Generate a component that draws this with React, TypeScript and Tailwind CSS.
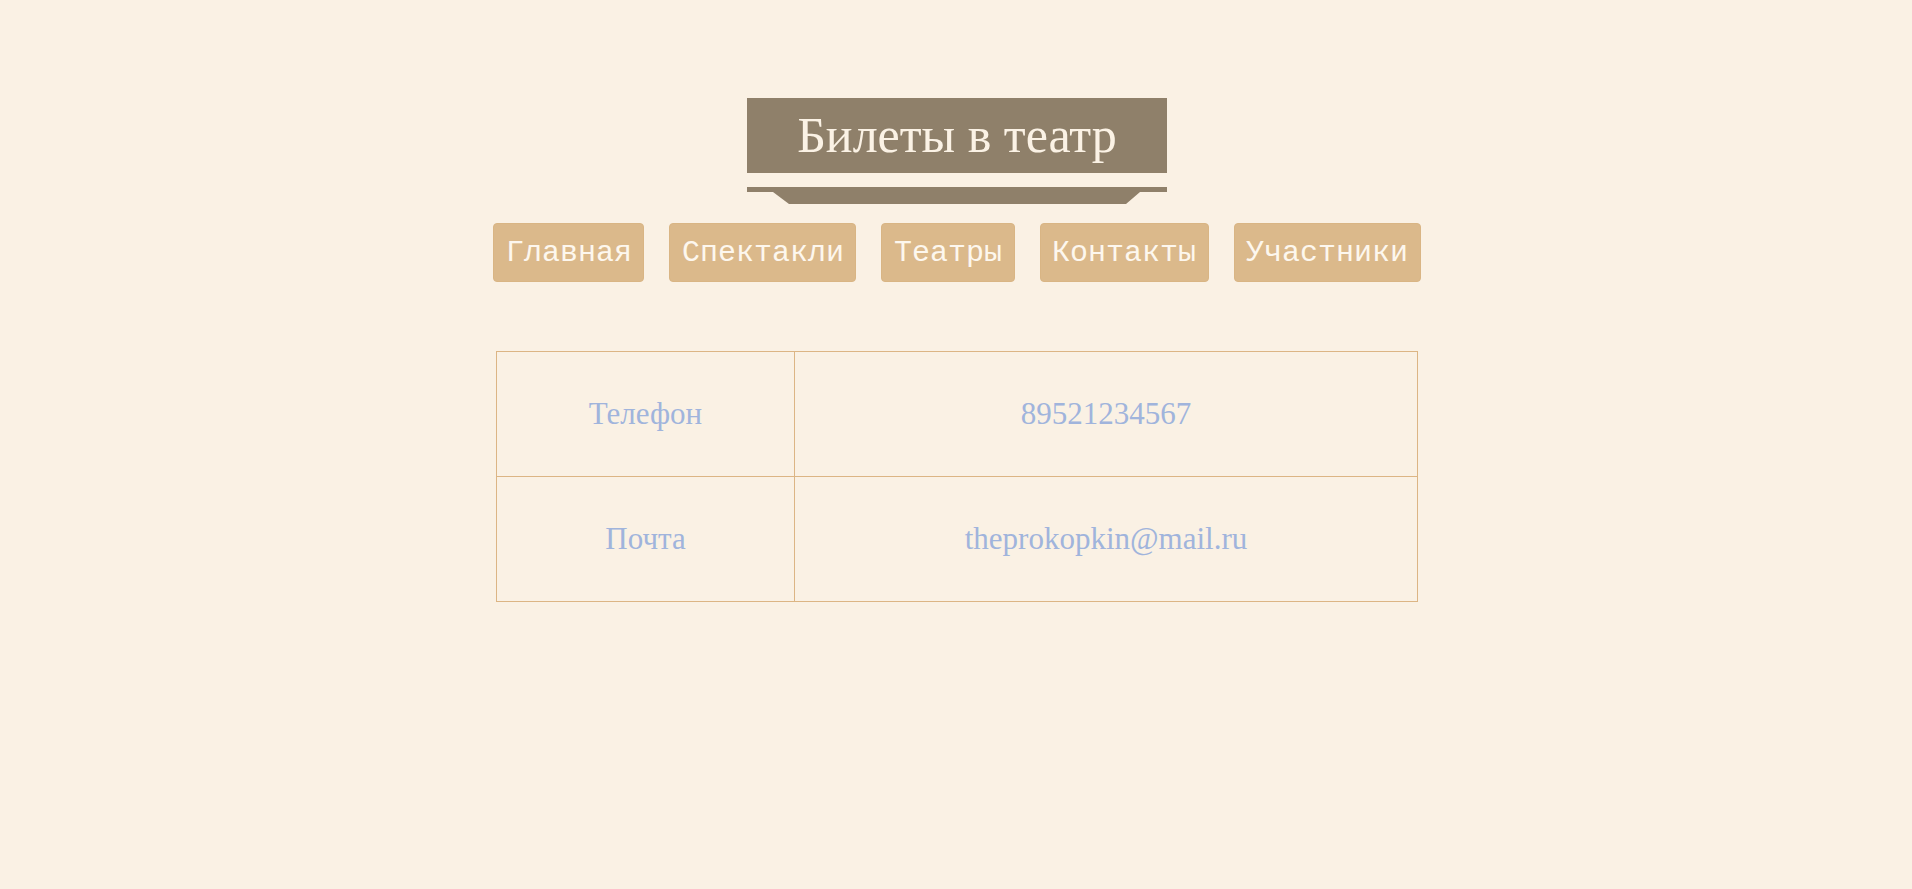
const NAV = ["Главная", "Спектакли", "Театры", "Контакты", "Участники"];

const CONTACTS = [
  { label: "Телефон", value: "89521234567" },
  { label: "Почта", value: "theprokopkin@mail.ru" },
];

export default function App() {
  return (
    <div className="min-h-screen w-full bg-[#faf1e4] pt-[98px] pl-[2px] flex flex-col items-center">
      {/* header plaque */}
      <div className="w-[420px] flex flex-col">
        <div className="h-[75px] bg-[#8f806a] flex items-center justify-center">
          <h1 className="font-['Liberation_Serif',serif] text-[50px] leading-none text-[#fbf2e5] pb-[2px]">
            Билеты в театр
          </h1>
        </div>
        <div className="mt-[14px] h-[17px] bg-[#8f806a] [clip-path:polygon(0_0,100%_0,100%_5px,393px_5px,379px_17px,42px_17px,26px_5px,0_5px)]" />
      </div>

      {/* nav */}
      <nav className="mt-[19px] flex gap-[25px]">
        {NAV.map((item) => (
          <a
            key={item}
            href="#"
            className="h-[59px] px-[11.5px] flex items-center rounded-[4px] border border-[#d9b584] bg-[#dbb98b] text-[#fdf7ee] font-['Liberation_Mono',monospace] text-[30px] leading-none"
          >
            {item}
          </a>
        ))}
      </nav>

      {/* contacts table */}
      <table className="mt-[69px] w-[922px] border-collapse font-['Liberation_Serif',serif] text-[31px] text-[#a0b4dc]">
        <tbody>
          {CONTACTS.map((c) => (
            <tr key={c.label} className="h-[125px]">
              <td className="w-[298px] border border-[#dcb584] text-center">{c.label}</td>
              <td className="border border-[#dcb584] text-center">{c.value}</td>
            </tr>
          ))}
        </tbody>
      </table>
    </div>
  );
}
